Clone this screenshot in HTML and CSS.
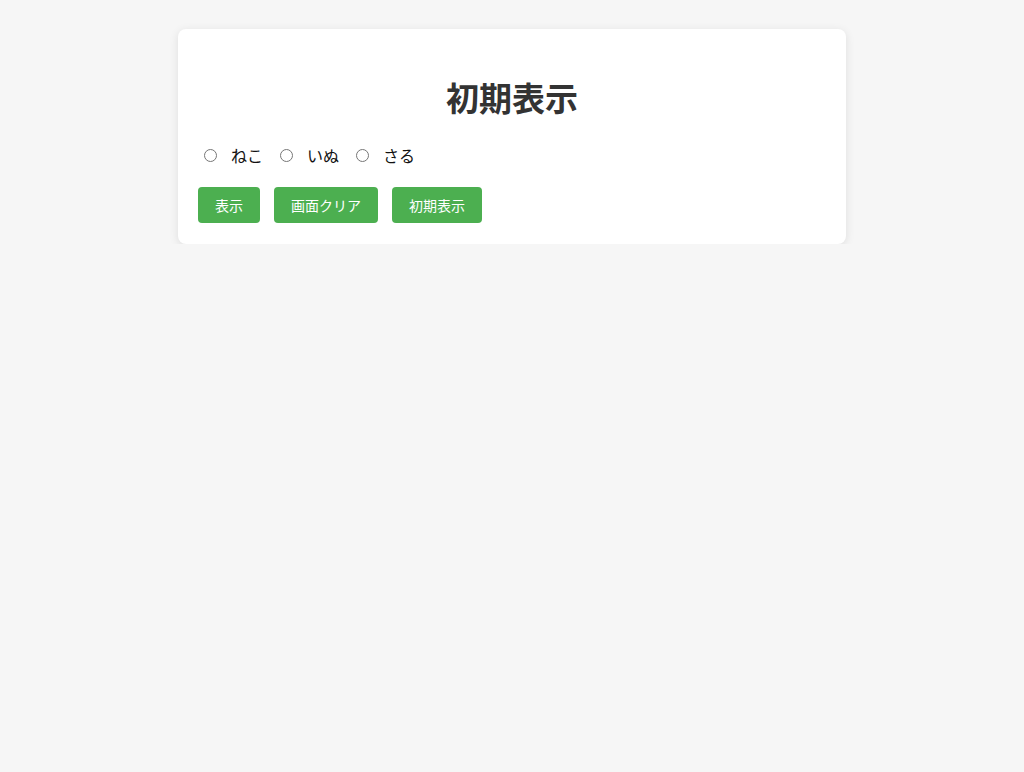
FILE: index.html
```html
<!DOCTYPE html>
<html lang="ja">
<head>
<meta charset="utf-8">
<title>初期表示</title>
<link rel="stylesheet" href="styles.css">
</head>
<body>
<div class="card">
  <h1 class="title">初期表示</h1>
  <div class="radios">
    <label class="opt"><input type="radio" name="animal" value="neko"><span>ねこ</span></label>
    <label class="opt"><input type="radio" name="animal" value="inu"><span>いぬ</span></label>
    <label class="opt"><input type="radio" name="animal" value="saru"><span>さる</span></label>
  </div>
  <div class="buttons">
    <button class="btn">表示</button>
    <button class="btn">画面クリア</button>
    <button class="btn">初期表示</button>
  </div>
</div>
</body>
</html>
```

FILE: styles.css
```css
html, body {
  margin: 0;
  padding: 0;
}
body {
  background: #f6f6f6;
  font-family: "Noto Sans CJK JP", "Noto Sans", sans-serif;
  color: #222;
  padding-top: 29px;
}
.card {
  width: 668px;
  box-sizing: border-box;
  margin: 0 auto;
  background: #fff;
  border-radius: 8px;
  box-shadow: 0 2px 10px rgba(0, 0, 0, 0.1);
  padding: 20px 20px 21px;
}
.title {
  margin: 25px 0 0;
  font-size: 33px;
  line-height: 46px;
  font-weight: 700;
  text-align: center;
  color: #333;
}
.radios {
  display: flex;
  align-items: center;
  margin-top: 23px;
  height: 24px;
  font-size: 16px;
  line-height: 24px;
  color: #111;
}
.opt {
  display: flex;
  align-items: center;
  margin-right: 11px;
}
.opt input {
  width: 13px;
  height: 13px;
  margin: 0 14px 0 6px;
}
.buttons {
  display: flex;
  gap: 14px;
  margin-top: 20px;
}
.btn {
  height: 36px;
  padding: 0 17px;
  border: none;
  border-radius: 4px;
  background: #4caf50;
  color: #fff;
  font-family: "Noto Sans CJK JP", "Noto Sans", sans-serif;
  font-size: 14px;
  cursor: pointer;
}
```
